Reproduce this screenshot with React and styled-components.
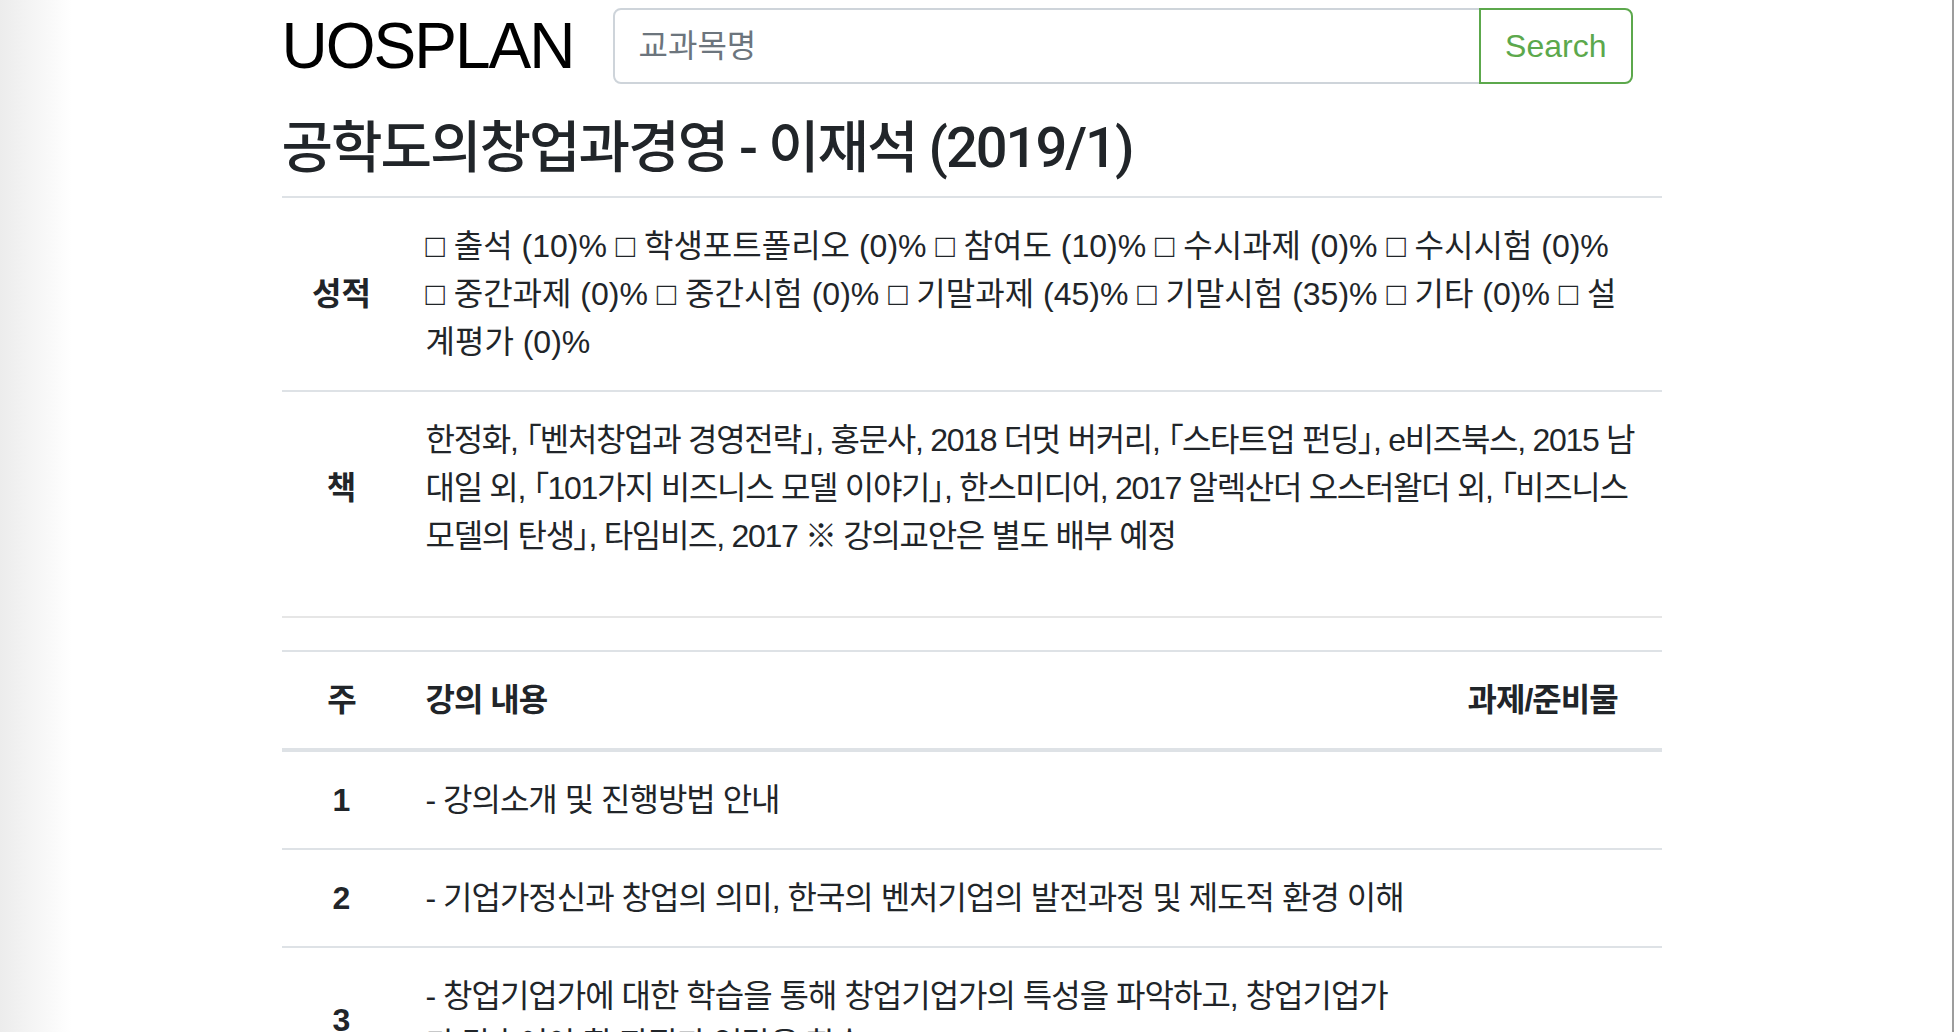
import React from 'react'
import styled, { createGlobalStyle } from 'styled-components'

const grades = [
  ['출석', 10],
  ['학생포트폴리오', 0],
  ['참여도', 10],
  ['수시과제', 0],
  ['수시시험', 0],
  ['중간과제', 0],
  ['중간시험', 0],
  ['기말과제', 45],
  ['기말시험', 35],
  ['기타', 0],
  ['설계평가', 0],
]

const book =
  '한정화, 「벤처창업과 경영전략」, 홍문사, 2018 더멋 버커리, 「스타트업 펀딩」, e비즈북스, 2015 남대일 외, 「101가지 비즈니스 모델 이야기」, 한스미디어, 2017 알렉산더 오스터왈더 외, 「비즈니스 모델의 탄생」, 타임비즈, 2017 ※ 강의교안은 별도 배부 예정'

const weeks = [
  { no: 1, text: '- 강의소개 및 진행방법 안내' },
  { no: 2, text: '- 기업가정신과 창업의 의미, 한국의 벤처기업의 발전과정 및 제도적 환경 이해' },
  {
    no: 3,
    text: '- 창업기업가에 대한 학습을 통해 창업기업가의 특성을 파악하고, 창업기업가\n가 갖추어야 할 자질과 역량을 학습',
  },
]

const gradeText = grades.map(([name, pct]) => `□\u00a0${name} (${pct})%`).join(' ')

const App = () => {
  return (
    <>
      <GlobalStyle />
      <Frame>
        <Container>
          <Header>
            <Brand>UOSPLAN</Brand>
            <SearchGroup>
              <SearchInput placeholder="교과목명" />
              <SearchButton>Search</SearchButton>
            </SearchGroup>
          </Header>

          <Title>공학도의창업과경영 - 이재석 (2019/1)</Title>

          <InfoTable>
            <colgroup>
              <col style={{ width: 120 }} />
              <col />
            </colgroup>
            <tbody>
              <tr>
                <LabelCell>성적</LabelCell>
                <Cell>
                  <GradeText>{gradeText}</GradeText>
                </Cell>
              </tr>
              <tr>
                <LabelCell>책</LabelCell>
                <Cell>
                  <BookText>{book}</BookText>
                </Cell>
              </tr>
            </tbody>
          </InfoTable>

          <Divider />

          <ScheduleTable>
            <colgroup>
              <col style={{ width: 120 }} />
              <col />
              <col style={{ width: 218 }} />
            </colgroup>
            <thead>
              <tr>
                <HeadCell $center>주</HeadCell>
                <HeadCell>강의 내용</HeadCell>
                <HeadCell>과제/준비물</HeadCell>
              </tr>
            </thead>
            <tbody>
              {weeks.map((w) => (
                <tr key={w.no}>
                  <LabelCell>{w.no}</LabelCell>
                  <Cell $pre>{w.text}</Cell>
                  <Cell />
                </tr>
              ))}
            </tbody>
          </ScheduleTable>
        </Container>
      </Frame>
    </>
  )
}

export default App

const GlobalStyle = createGlobalStyle`
body {
  margin: 0;
  font-family: "Liberation Sans", "Noto Sans CJK KR", sans-serif;
  font-size: 32px;
  line-height: 48px;
  color: #212529;
  background: linear-gradient(90deg, #ececec 0px, #ffffff 72px);
  font-feature-settings: "palt";
}
* {
  box-sizing: border-box;
}
`

const Frame = styled.div`
display: flex;
justify-content: center;
height: 1032px;
padding-right: 9px;
border-right: 2px solid #9d9d9d;
overflow: hidden;
`

const Container = styled.div`
width: 1380px;
`

const Header = styled.div`
display: flex;
align-items: center;
padding-top: 8px;
padding-right: 29px;
`

const Brand = styled.div`
font-size: 64px;
line-height: 76px;
color: #000;
letter-spacing: -2px;
`

const SearchGroup = styled.div`
display: flex;
width: 1020px;
margin-left: auto;
`

const SearchInput = styled.input`
flex: 1;
height: 76px;
padding: 0 24px;
border: 2px solid #ced4da;
border-radius: 8px 0 0 8px;
font-family: inherit;
font-size: 32px;
color: #495057;
outline: none;

&::placeholder {
  color: #6c757d;
}
`

const SearchButton = styled.button`
height: 76px;
margin-left: -2px;
padding: 0 24px;
background: #fff;
border: 2px solid #5ca84c;
border-radius: 0 8px 8px 0;
color: #5ca84c;
font-family: inherit;
font-size: 32px;
cursor: pointer;
`

const Title = styled.h3`
margin: 31px 0 14px;
font-family: Roboto, "Noto Sans CJK KR", sans-serif;
font-size: 56px;
line-height: 67px;
font-weight: 500;
letter-spacing: -2px;
`

const InfoTable = styled.table`
width: 100%;
border-collapse: collapse;
table-layout: fixed;
`

const Divider = styled.hr`
margin: 32px 0;
border: 0;
border-top: 2px solid #e6e6e6;
`

const ScheduleTable = styled.table`
width: 100%;
border-collapse: collapse;
table-layout: fixed;
letter-spacing: -1px;
`

const Cell = styled.td`
padding: 24px;
border-top: 2px solid #dee2e6;
vertical-align: middle;
white-space: ${(p) => (p.$pre ? 'pre-line' : 'normal')};
`

const LabelCell = styled(Cell)`
text-align: center;
font-weight: 700;
letter-spacing: 0;
`

const HeadCell = styled.th`
padding: 24px;
border-top: 2px solid #dee2e6;
border-bottom: 4px solid #dee2e6;
text-align: ${(p) => (p.$center ? 'center' : 'left')};
font-weight: 700;
vertical-align: bottom;
`

const GradeText = styled.span`
letter-spacing: 0;
`

const BookText = styled.span`
letter-spacing: -1.3px;
`
